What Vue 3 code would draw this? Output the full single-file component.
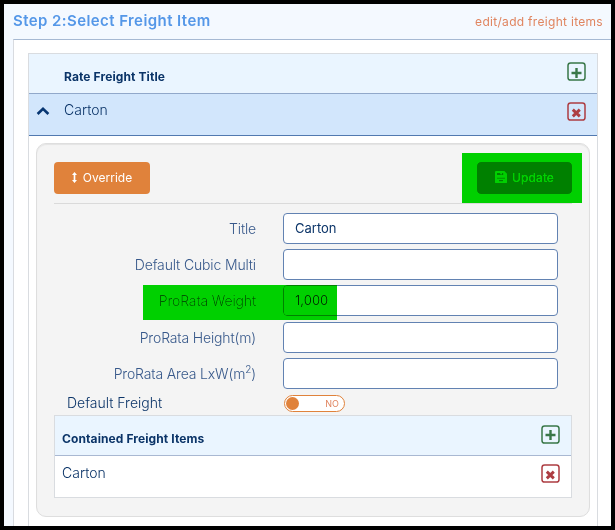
<script setup>
import { ref } from 'vue'

const fields = ref([
  { label: 'Title', value: 'Carton' },
  { label: 'Default Cubic Multi', value: '' },
  { label: 'ProRata Weight', value: '1,000', marked: true },
  { label: 'ProRata Height(m)', value: '' },
  { label: 'ProRata Area LxW(m', sup: '2', tail: ')', value: '' },
])
</script>

<template>
  <div class="frame">
    <header class="top">
      <h1>Step 2:Select Freight Item</h1>
      <a class="link">edit/add freight items</a>
    </header>
    <main class="body">
      <section class="table">
        <div class="head">
          <b>Rate Freight Title</b>
          <span class="icon add">
            <svg viewBox="0 0 19 19"><rect x="1" y="1" width="17" height="17" rx="2.6" /><path d="M9.5 6v10M4.5 11h10" /></svg>
          </span>
        </div>
        <div class="row selected">
          <svg class="chevron" viewBox="0 0 14 10"><path d="M1.6 8 7 2.8 12.4 8" /></svg>
          <span>Carton</span>
          <span class="icon remove">
            <svg viewBox="0 0 19 19"><rect x="1" y="1" width="17" height="17" rx="2.6" /><path d="m5.8 7.6 7 6.8m0-6.8-7 6.8" /></svg>
          </span>
        </div>
        <div class="panel">
          <div class="actions">
            <button class="btn override">
              <svg class="arrows" viewBox="0 0 6 13"><path d="M3 0 6 3.5H4v6h2L3 13 0 9.5h2v-6H0z" /></svg>
              Override
            </button>
            <div class="update-wrap">
              <button class="btn update">
                <svg class="disk" viewBox="0 0 12 12"><path fill-rule="evenodd" d="M1.5 0H9l3 3v7.5a1.5 1.5 0 0 1-1.5 1.5h-9A1.5 1.5 0 0 1 0 10.5v-9A1.5 1.5 0 0 1 1.5 0zM2 1.7v2.6h6.5V1.7H7v1.5H5.5V1.7zM2 6.5v1.2h8V6.5zM4 9v1.5h4V9z" /></svg>
                Update
              </button>
              <i class="marker update-marker"></i>
            </div>
          </div>
          <div class="fields">
            <div v-for="f in fields" :key="f.label" class="field">
              <label>{{ f.label }}<sup v-if="f.sup">{{ f.sup }}</sup>{{ f.tail }}</label>
              <div class="input">{{ f.value }}</div>
              <i v-if="f.marked" class="marker field-marker"></i>
            </div>
          </div>
          <div class="toggle-row">
            <span class="toggle-label">Default Freight</span>
            <span class="toggle"><i class="knob"></i><span>NO</span></span>
          </div>
          <div class="inner">
            <div class="head">
              <b>Contained Freight Items</b>
              <span class="icon add">
                <svg viewBox="0 0 19 19"><rect x="1" y="1" width="17" height="17" rx="2.6" /><path d="M9.5 5v10M4.5 10h10" /></svg>
              </span>
            </div>
            <div class="row">
              <span>Carton</span>
              <span class="icon remove">
                <svg viewBox="0 0 19 19"><rect x="1" y="1" width="17" height="17" rx="2.6" /><path d="m5.8 7.6 7 6.8m0-6.8-7 6.8" /></svg>
              </span>
            </div>
          </div>
        </div>
      </section>
    </main>
  </div>
</template>

<style>
body {
  margin: 0;
  overflow: hidden;
}
</style>

<style scoped>
* {
  box-sizing: border-box;
}
.frame {
  width: 615px;
  height: 530px;
  border: 4px solid #000;
  background: #f4f9ff;
  padding-left: 9px;
  overflow: hidden;
  display: flex;
  flex-direction: column;
  font-family: Inter, "Liberation Sans", sans-serif;
  font-weight: 300;
  font-size: 14px;
  color: #0b3468;
}
.top {
  height: 35px;
  flex: none;
  display: flex;
  justify-content: space-between;
  padding: 7px 8px 0 0;
}
h1 {
  margin: 0;
  font-size: 15px;
  line-height: 20px;
  font-weight: 600;
  letter-spacing: 0.42px;
  color: #5497e8;
}
.link {
  font-size: 12px;
  line-height: 22px;
  font-weight: 400;
  letter-spacing: 0.3px;
  color: #e08560;
}
.body {
  flex: 1;
  background: #fff;
  border-top: 1px solid #a6b9d3;
  border-left: 1px solid #d8dbe0;
  padding: 13px 13px 0 14px;
}
.table {
  border: 1px solid #d9dce0;
  height: 500px;
}
.head {
  height: 40px;
  background: #eaf5ff;
  border-bottom: 1px solid #91a8ca;
  display: flex;
  padding: 0 11px 0 35px;
}
.head b {
  flex: 1;
  font-size: 12px;
  font-weight: 700;
  letter-spacing: 0.1px;
  line-height: 16px;
  padding-top: 15px;
}
.icon {
  width: 19px;
  height: 19px;
  margin-top: 8px;
}
.icon svg {
  display: block;
  width: 19px;
  height: 19px;
  fill: none;
  stroke: currentColor;
  stroke-width: 1.5;
}
.icon path {
  stroke-width: 2.4;
}
.remove path {
  stroke-width: 2.9;
}
.add {
  color: #397748;
}
.remove {
  color: #ad3d42;
}
.row {
  height: 42px;
  display: flex;
}
.row > span:not(.icon) {
  flex: 1;
  line-height: 20px;
  padding-top: 7px;
}
.selected {
  background: #d2e6fc;
  border-bottom: 1px solid #5179b0;
  padding: 0 11px 0 7px;
}
.selected > span:not(.icon) {
  padding-top: 6px;
}
.chevron {
  width: 14px;
  height: 10px;
  margin: 12px 14px 0 0;
  fill: none;
  stroke: #073672;
  stroke-width: 2.6;
}
.panel {
  margin: 7px 7px 0;
  height: 374px;
  padding: 18px 17px 0;
  background: #f4f4f4;
  border: 1px solid #dedede;
  border-radius: 10px;
  box-shadow: inset 0 1px 1px #e4e4e4;
}
.actions {
  display: flex;
  justify-content: space-between;
  height: 42px;
  border-bottom: 1px solid #dadada;
}
.btn {
  border: 0;
  border-radius: 4px;
  height: 32px;
  padding: 0 0 2px;
  display: flex;
  align-items: center;
  justify-content: center;
  font: 500 12px Inter, sans-serif;
  color: #fff;
}
.override {
  width: 96px;
  gap: 6px;
  font-weight: 400;
  background: #e0823b;
}
.arrows {
  width: 5px;
  height: 13px;
  fill: #fff;
}
.update-wrap {
  position: relative;
  height: 32px;
}
.update {
  width: 95px;
  gap: 5px;
  background: #008000;
  font-weight: 400;
  letter-spacing: 0.15px;
}
.disk {
  width: 12px;
  height: 12px;
  fill: #fff;
}
.marker {
  position: absolute;
  background: #00d000;
  mix-blend-mode: darken;
}
.update-marker {
  inset: -9px -10px -9px -15px;
}
.fields {
  padding-top: 9px;
  display: grid;
  grid-auto-rows: 31px;
  row-gap: 5.2px;
}
.field {
  position: relative;
  display: grid;
  grid-template-columns: 202px 275px;
  grid-template-rows: 31px;
  column-gap: 27px;
}
.field label {
  text-align: right;
  line-height: 31px;
  letter-spacing: -0.15px;
  color: #37588a;
  white-space: nowrap;
}
sup {
  font-size: 10px;
  line-height: 0;
}
.input {
  border: 1px solid #6282b2;
  border-radius: 4px;
  background: #fff;
  padding-left: 11px;
  line-height: 29px;
  font-size: 13px;
  font-weight: 400;
}
.field-marker {
  left: 89px;
  top: 0;
  width: 194px;
  height: 35px;
}
.toggle-row {
  display: flex;
  height: 26px;
  padding-left: 13px;
}
.toggle-label {
  width: 217px;
  line-height: 28px;
}
.toggle {
  margin-top: 6px;
  width: 61px;
  height: 17px;
  border: 1px solid #e0823b;
  border-radius: 9px;
  background: #fff;
  display: flex;
  align-items: center;
  justify-content: space-between;
  padding: 0 5px 0 1px;
  font-size: 9px;
  font-weight: 400;
  color: #e08560;
}
.knob {
  width: 13px;
  height: 13px;
  border-radius: 50%;
  background: #e0823b;
}
.inner {
  height: 83px;
  border: 1px solid #d9dce0;
  background: #fff;
}
.inner .head {
  padding: 0 11px 0 7px;
  border-bottom-color: #a9b8d2;
}
.inner .head .icon {
  margin-top: 9px;
}
.inner .row {
  padding: 0 11px 0 7px;
}
</style>
